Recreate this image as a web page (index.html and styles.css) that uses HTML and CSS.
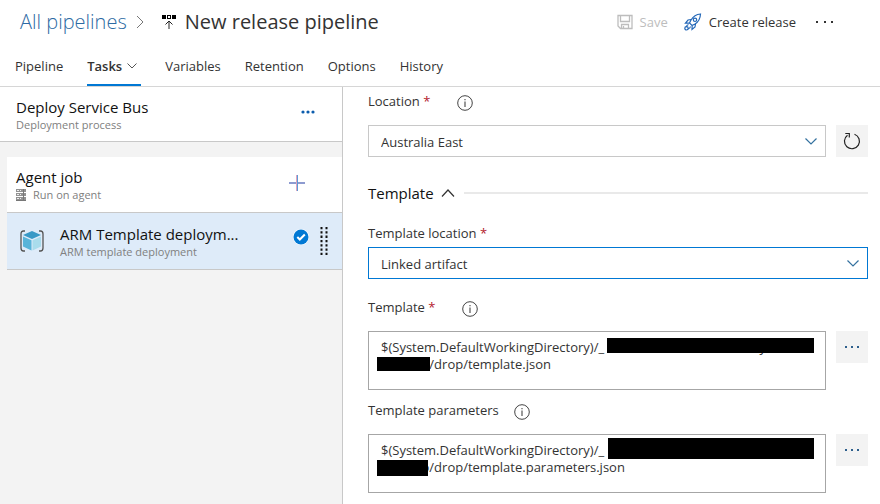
FILE: index.html
```html
<!DOCTYPE html>
<html lang="en">
<head>
<meta charset="utf-8">
<title>New release pipeline</title>
<link rel="stylesheet" href="styles.css">
</head>
<body>
<header class="topbar">
  <nav class="crumbs" aria-label="Breadcrumb">
    <a class="crumb-link" href="#">All pipelines</a>
    <svg class="crumb-sep" width="8" height="14" viewBox="0 0 8 14"><path d="M1 1l6 6-6 6" fill="none" stroke="#777"/></svg>
    <svg class="crumb-icon" width="14" height="15" viewBox="0 0 14 15"><path d="M0 0h4v4H0zM5 0h4v4H5zM10 0h4v4h-4z" fill="#000"/><path d="M6 1h2v2H6z" fill="#fff"/><path d="M7 14V6.500M3.500 9.500L7 6l3.500 3.500" fill="none" stroke="#222"/></svg>
    <h1 class="title">New release pipeline</h1>
  </nav>
  <div class="actions">
    <button class="action save" type="button" disabled>
      <svg width="16" height="16" viewBox="0 0 16 16"><path d="M1 1.500h14v13H3.500L1 12zM3.500 1.500v6h9v-6M4.500 14.500v-4h7v4M6.500 12v2.500" fill="none" stroke="#bdbdbd" stroke-width="1.300"/></svg>
      Save
    </button>
    <button class="action" type="button">
      <svg width="18" height="18" viewBox="0 0 18 18" fill="none" stroke="#2468b8" stroke-width="1.200"><path d="M16.500 1c-4 .3-7 1.800-9.500 6l-1.500 3 2.500 2.500 3-1.500c4-2.500 5.300-5.500 5.500-10zM7 6.500L4 7 1.500 10l4-.2M11.500 11L11 14l-3 2.500.2-4"/><circle cx="11" cy="6.800" r="1.700"/><path d="M4.500 11.500c-1.500.3-2 1.300-2.300 2.500M6.500 13.500c-.2 1.500-1 2-2.500 2.300"/><circle cx="2.500" cy="15.300" r="1.700"/></svg>
      Create release
    </button>
    <button class="action" type="button" aria-label="More actions">
      <svg width="18" height="2" viewBox="0 0 18 2"><path d="M0 0h2v2H0zM8 0h2v2H8zM15 0h2v2h-2z" fill="#333"/></svg>
    </button>
  </div>
</header>
<nav class="tabs" aria-label="Pipeline sections">
  <a class="tab" href="#">Pipeline</a>
  <a class="tab active" href="#" aria-current="page">Tasks
    <svg width="10" height="6" viewBox="0 0 10 6"><path d="M.5.5L5 5 9.500.5" fill="none" stroke="#555"/></svg>
  </a>
  <a class="tab" href="#">Variables</a>
  <a class="tab" href="#">Retention</a>
  <a class="tab" href="#">Options</a>
  <a class="tab" href="#">History</a>
</nav>
<main class="content">
  <aside class="side">
    <section class="row process">
      <div class="row-text">
        <h2 class="row-title">Deploy Service Bus</h2>
        <p class="row-sub">Deployment process</p>
      </div>
      <button class="icon-btn more" type="button" aria-label="More options">
        <svg width="14" height="4" viewBox="0 0 14 4" fill="#0b5cad"><circle cx="2" cy="2" r="1.600"/><circle cx="7" cy="2" r="1.600"/><circle cx="12" cy="2" r="1.600"/></svg>
      </button>
    </section>
    <div class="jobs">
      <section class="row job">
        <div class="row-text">
          <h2 class="row-title">Agent job</h2>
          <p class="row-sub">
            <svg width="10" height="12" viewBox="0 0 10 12"><path d="M0 0h10v3H0zM0 4h10v3H0zM0 8h10v3H0z" fill="#929292"/><path d="M1 1.500h2M4 1.500h1M1 5.500h2M4 5.500h1M1 9.500h2M4 9.500h1" stroke="#eee"/><path d="M7.500 0v12M0 11.500h10" stroke="#777"/></svg>
            Run on agent
          </p>
        </div>
        <button class="icon-btn add" type="button" aria-label="Add a task">
          <svg width="16" height="16" viewBox="0 0 16 16"><path d="M0 8h16" stroke="#8d9bd0" stroke-width="2"/><path d="M7.500 0v16" stroke="#e0a5bd"/><path d="M8.500 0v16" stroke="#5b9bd8"/></svg>
        </button>
      </section>
      <section class="row task">
        <svg class="task-icon" width="24" height="22" viewBox="0 0 24 22"><path d="M5 1H3.500Q1 1 1 4v14q0 3 2.500 3H5M19 1h1.500Q23 1 23 4v14q0 3-2.500 3H19" fill="none" stroke="#555" stroke-width="1.300"/><path d="M12 1l9 4-9 4-9-4z" fill="#3999c6"/><path d="M3 6.500l8.500 3.700V20.500L3 16.500z" fill="#59b4d9"/><path d="M21 6.500l-8.500 3.700V20.500l8.500-4z" fill="#a9dcec"/></svg>
        <div class="row-text">
          <h2 class="row-title">ARM Template deploym...</h2>
          <p class="row-sub">ARM template deployment</p>
        </div>
        <svg class="check" width="16" height="16" viewBox="0 0 16 16"><circle cx="8" cy="8" r="8" fill="#fff"/><circle cx="8" cy="8" r="7.500" fill="#0078d4"/><path d="M4.300 8l2.500 2.500 5-5" fill="none" stroke="#fff" stroke-width="2"/></svg>
        <svg class="grip" width="8" height="28" viewBox="0 0 8 28"><path d="M1.500 0v28M6.500 0v28" stroke="#111" stroke-width="2" stroke-dasharray="2.300 2"/></svg>
      </section>
    </div>
  </aside>
  <form class="form">
    <div class="label-row">
      <label for="location">Location <span class="req">*</span></label>
      <button class="icon-btn info" type="button" aria-label="About location"><svg width="16" height="16" viewBox="0 0 16 16"><circle cx="8" cy="8" r="7.300" fill="none" stroke="#444"/><path d="M8 6.500V12M8 4v1.300" stroke="#555" stroke-width="1.200"/></svg></button>
    </div>
    <div class="field">
      <div class="select">
        <select id="location"><option>Australia East</option></select>
        <svg class="caret" width="12" height="7" viewBox="0 0 12 7"><path d="M.5.500L6 6 11.500.500" fill="none" stroke="#34719f" stroke-width="1.200"/></svg>
      </div>
      <button class="side-btn" type="button" aria-label="Refresh">
        <svg width="18" height="18" viewBox="0 0 18 18"><path d="M11.500 2.200A7.500 7.500 0 1 1 4.500 3.200M2.300 1.500h4v4" fill="none" stroke="#222" stroke-width="1.200"/></svg>
      </button>
    </div>
    <h2 class="section">
      <button class="section-toggle" type="button" aria-expanded="true">Template
        <svg width="14" height="8" viewBox="0 0 14 8"><path d="M1 7.500L7 1l6 6.500" fill="none" stroke="#333" stroke-width="1.200"/></svg>
      </button>
    </h2>
    <div class="label-row compact">
      <label for="template-location">Template location <span class="req">*</span></label>
    </div>
    <div class="field">
      <div class="select">
        <select id="template-location" class="focused"><option>Linked artifact</option></select>
        <svg class="caret" width="12" height="7" viewBox="0 0 12 7"><path d="M.5.500L6 6 11.500.500" fill="none" stroke="#34719f" stroke-width="1.200"/></svg>
      </div>
    </div>
    <div class="label-row spaced">
      <label for="template">Template <span class="req">*</span></label>
      <button class="icon-btn info" type="button" aria-label="About template"><svg width="16" height="16" viewBox="0 0 16 16"><circle cx="8" cy="8" r="7.300" fill="none" stroke="#444"/><path d="M8 6.500V12M8 4v1.300" stroke="#555" stroke-width="1.200"/></svg></button>
    </div>
    <div class="field">
      <div class="area">
        <textarea id="template" spellcheck="false">$(System.DefaultWorkingDirectory)/_&nbsp;&nbsp;&nbsp;&nbsp;&nbsp;&nbsp;&nbsp;&nbsp;&nbsp;&nbsp;&nbsp;&nbsp;&nbsp;&nbsp;&nbsp;&nbsp;&nbsp;&nbsp;&nbsp;&nbsp;&nbsp;&nbsp;&nbsp;&nbsp;&nbsp;&nbsp;&nbsp;&nbsp;&nbsp;&nbsp;&nbsp;&nbsp;&nbsp;&nbsp;&nbsp;&nbsp;&nbsp;&nbsp;&nbsp;&nbsp;&nbsp;&nbsp;&nbsp;&nbsp;&nbsp;&nbsp;y
&nbsp;&nbsp;&nbsp;&nbsp;&nbsp;&nbsp;&nbsp;&nbsp;&nbsp;&nbsp;&nbsp;&nbsp;o/drop/template.json</textarea>
        <span class="mask mask-a"></span>
        <span class="mask mask-b"></span>
      </div>
      <button class="side-btn" type="button" aria-label="Browse template"><svg width="16" height="2" viewBox="0 0 16 2"><path d="M1 0h2v2H1zM7 0h2v2H7zM13 0h2v2h-2z" fill="#2d5f8c"/></svg></button>
    </div>
    <div class="label-row tight">
      <label for="parameters">Template parameters</label>
      <button class="icon-btn info near" type="button" aria-label="About template parameters"><svg width="16" height="16" viewBox="0 0 16 16"><circle cx="8" cy="8" r="7.300" fill="none" stroke="#444"/><path d="M8 6.500V12M8 4v1.300" stroke="#555" stroke-width="1.200"/></svg></button>
    </div>
    <div class="field">
      <div class="area">
        <textarea id="parameters" spellcheck="false">$(System.DefaultWorkingDirectory)/_
&nbsp;&nbsp;&nbsp;&nbsp;&nbsp;&nbsp;&nbsp;&nbsp;&nbsp;&nbsp;&nbsp;&nbsp;o/drop/template.parameters.json</textarea>
        <span class="mask mask-c"></span>
        <span class="mask mask-d"></span>
      </div>
      <button class="side-btn" type="button" aria-label="Browse template parameters"><svg width="16" height="2" viewBox="0 0 16 2"><path d="M1 0h2v2H1zM7 0h2v2H7zM13 0h2v2h-2z" fill="#2d5f8c"/></svg></button>
    </div>
  </form>
</main>
</body>
</html>
```
FILE: styles.css
```css
* { box-sizing: border-box; }
body {
  margin: 0;
  min-height: 100vh;
  display: flex;
  flex-direction: column;
  background: #fff;
  color: #333;
  font: 13px/18px "Open Sans", "Noto Sans", sans-serif;
}
h1, h2, p { margin: 0; font-weight: 400; }
a { color: inherit; text-decoration: none; }
svg { flex: none; display: block; }
button { border: 0; padding: 0; background: none; color: inherit; font: inherit; cursor: pointer; }
select, textarea { font: inherit; color: inherit; background: #fff; border-radius: 0; }

.topbar { display: flex; justify-content: space-between; align-items: center; height: 44px; padding: 0 46px 0 20px; }
.crumbs { display: flex; align-items: center; }
.crumb-link { font-size: 20px; line-height: 28px; font-weight: 300; color: #2c6aa3; }
.crumb-sep { margin-left: 9px; }
.crumb-icon { margin: 0 9px 0 18px; }
.title { font-size: 20px; line-height: 28px; }
.actions { display: flex; align-items: center; gap: 16px; }
.action { display: flex; align-items: center; gap: 7px; }
.action:last-child { margin-left: 4px; }
.save { color: #bdbdbd; }

.tabs { display: flex; gap: 24px; height: 43px; padding: 0 15px; border-bottom: 1px solid #d6d6d6; }
.tab { display: flex; align-items: center; gap: 5px; padding-top: 4px; border-bottom: 2px solid transparent; }
.active { font-weight: 600; padding-right: 4px; border-color: #0078d4; }

.content { flex: 1; display: flex; }
.side { flex: 0 0 343px; background: #f3f3f3; border-right: 1px solid #c8c8c8; }
.row { display: flex; align-items: center; background: #fff; border-bottom: 1px solid #c8c8c8; }
.row-text { flex: 1; }
.row-title { font-size: 15px; line-height: 20px; color: #111; }
.row-sub { display: flex; align-items: center; gap: 7px; font-size: 11px; line-height: 15px; color: #808080; }
.process { height: 55px; padding: 0 27px 0 16px; }
.jobs { padding: 15px 0 0 7px; }
.job { height: 56px; padding: 0 37px 0 9px; }
.task { height: 57px; padding: 0 14px 0 13px; background: #deebf9; }
.task-icon { margin-right: 16px; }
.check { margin: 0 11px 8px 0; }
.icon-btn { display: flex; align-items: center; }
.more, .add { margin-bottom: 4px; }

.form { flex: 1; padding: 0 12px 11px 25px; }
.label-row { display: flex; align-items: center; height: 28px; margin-bottom: 10px; }
.compact { height: 20px; margin-bottom: 4px; }
.spaced { margin-top: 14px; }
.tight { margin-top: 6px; }
.req { color: #b3202c; }
.info { margin: 4px 0 0 27px; }
.near { margin-left: 15px; }
.field { display: flex; align-items: flex-start; gap: 10px; }
.select, .area { position: relative; flex: 1; }
.select select {
  display: block;
  width: 100%;
  height: 32px;
  padding: 2px 32px 0 12px;
  border: 1px solid #c8c8c8;
  appearance: none;
}
.select .focused { border-color: #0078d4; }
.caret { position: absolute; right: 9px; top: 13px; pointer-events: none; }
.side-btn { flex: 0 0 32px; height: 32px; display: grid; place-items: center; background: #f3f3f3; }
.section { display: flex; align-items: center; gap: 9px; margin: 24px 0 18px; }
.section::after { content: ""; flex: 1; height: 2px; background: #e9e9e9; }
.section-toggle { display: flex; align-items: center; gap: 7px; font-size: 15px; line-height: 24px; color: #111; }
.area textarea {
  display: block;
  width: 100%;
  height: 59px;
  padding: 7px 12px;
  line-height: 17px;
  border: 1px solid #a6a6a6;
  resize: none;
  overflow: hidden;
}
.mask { position: absolute; background: #000; }
.mask-a { left: 239px; right: 12px; top: 7px; height: 15px; }
.mask-b { left: 9px; width: 53px; top: 26px; height: 14px; }
.mask-c { left: 240px; right: 12px; top: 4px; height: 21px; }
.mask-d { left: 9px; width: 51px; top: 26px; height: 16px; }
```
